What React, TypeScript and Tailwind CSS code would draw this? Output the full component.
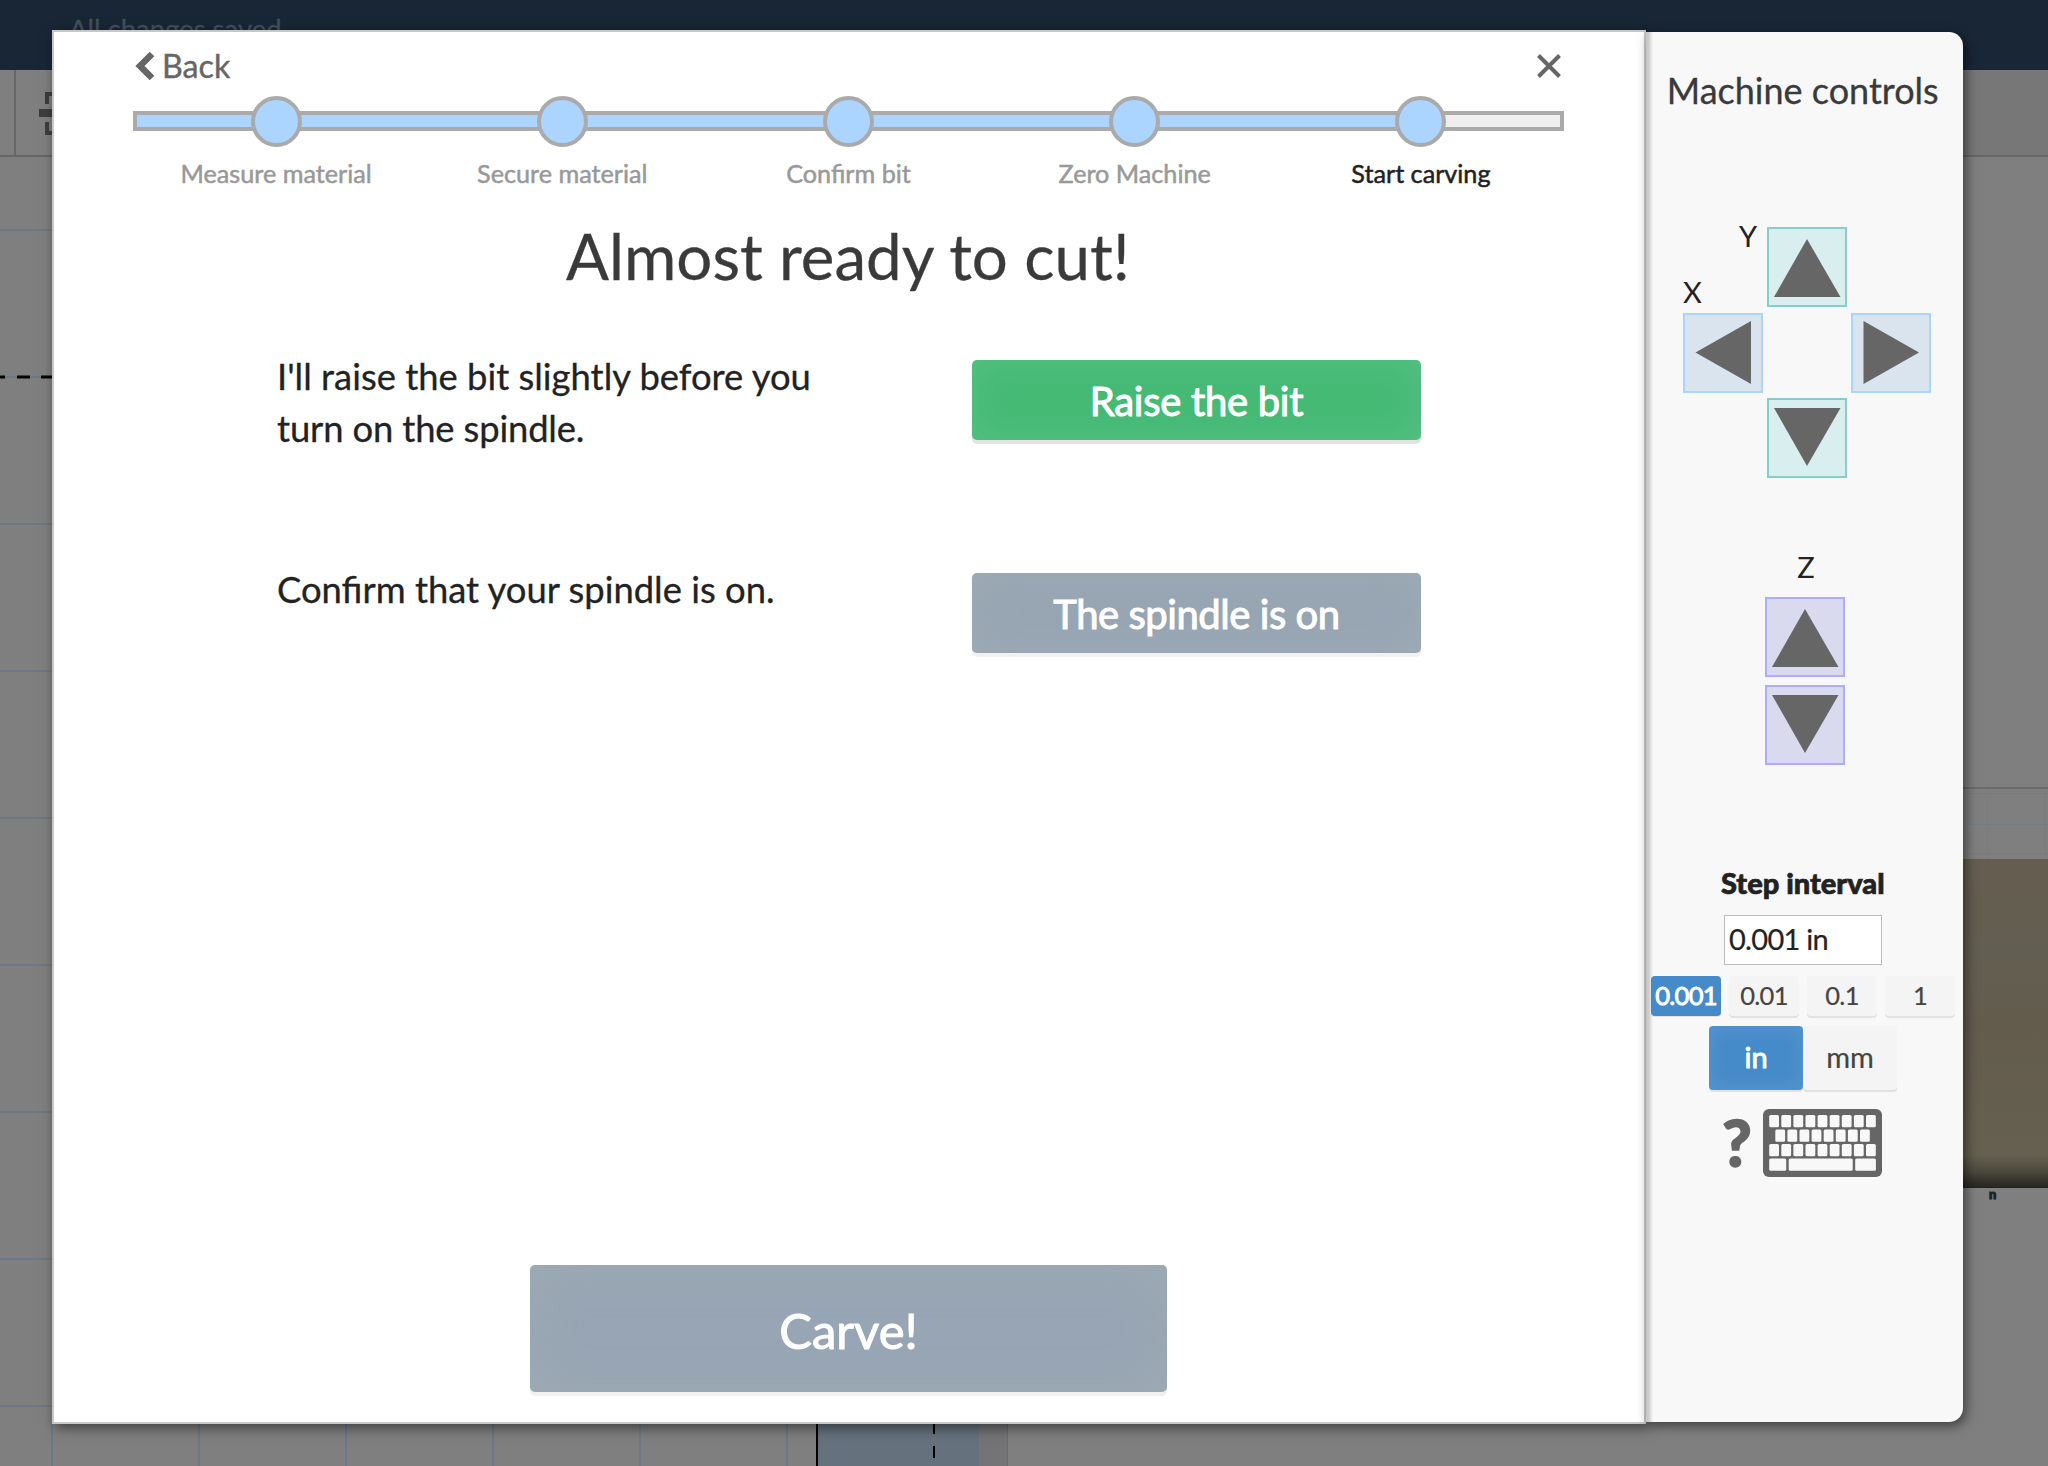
import React from "react";

const steps = ["Measure material", "Secure material", "Confirm bit", "Zero Machine", "Start carving"];
const rowLines = [229, 523, 670, 817, 964, 1111, 1258, 1405];
const colLines = [51, 198, 345, 492, 639, 786];

function Backdrop() {
  return (
    <svg className="absolute inset-0" width="2048" height="1466" shapeRendering="crispEdges">
      <defs>
        <linearGradient id="wood" x1="0" y1="0" x2="0" y2="1">
          <stop offset="0" stopColor="#655d50" />
          <stop offset="0.3" stopColor="#625e50" />
          <stop offset="0.5" stopColor="#635c4d" />
          <stop offset="0.9" stopColor="#65604f" />
          <stop offset="0.95" stopColor="#4c483c" />
          <stop offset="1" stopColor="#25231f" />
        </linearGradient>
      </defs>
      <rect width="2048" height="1466" fill="#7f7f7f" />
      <rect x="1900" y="70" width="148" height="85" fill="#777" />
      <rect width="2048" height="70" fill="#192635" />
      <rect x="0" y="155" width="2048" height="2" fill="#666" />
      <rect x="14" y="70" width="2" height="85" fill="#666" />
      <path d="M47 104V94H58M47 122V133H58" stroke="#3d3d3d" strokeWidth="4" fill="none" />
      <rect x="39" y="109" width="20" height="8" fill="#3d3d3d" />
      {rowLines.map((y) => (
        <rect key={y} x="0" y={y} width="52" height="2" fill="#6c7885" />
      ))}
      <rect x="0" y="376" width="52" height="2" fill="#6c7885" />
      <path d="M0 377h5M17 377h13M41 377h12" stroke="#000" strokeWidth="3" shapeRendering="auto" />
      {colLines.map((x) => (
        <rect key={x} x={x} y="1424" width="2" height="42" fill="#6c7885" />
      ))}
      <rect x="818" y="1420" width="161" height="46" fill="#65717d" />
      <rect x="816" y="1420" width="2" height="46" fill="#000" />
      <path d="M934 1424v10M934 1446v12" stroke="#000" strokeWidth="2" />
      <rect x="979" y="1420" width="28" height="46" fill="#747477" />
      <rect x="1007" y="1420" width="1" height="46" fill="#6c6c6c" />
      <rect x="1960" y="787" width="88" height="2" fill="#6b6b6b" />
      <path d="M1960 793.500h88M1960 824.500h88M1960 853.500h88M1987.500 789v70M2045.500 789v70" stroke="#757c87" strokeWidth="1" />
      <rect x="1955" y="859" width="93" height="329" fill="url(#wood)" />
      <text x="1989" y="1199" fontSize="13" fontWeight="900" fill="#222" stroke="#222" strokeWidth="1" fontFamily="Lato">
        n
      </text>
    </svg>
  );
}

function Arrow({ dir, tone }: { dir: "up" | "down" | "left" | "right"; tone: string }) {
  const points = {
    up: "39.500,11.500 73,69.500 6.500,69.500",
    down: "6.500,9.500 73,9.500 39.500,67.500",
    left: "12,39 67.500,7.500 67.500,70.500",
    right: "12,7.500 67.500,39 12,70.500",
  }[dir];
  return (
    <button className={`h-20 w-20 border-2 ${tone}`}>
      <svg viewBox="1.500 1.500 76 76" className="h-[76px] w-[76px]">
        <polygon points={points} fill="#666" />
      </svg>
    </button>
  );
}

const teal = "border-[#86cdcb] bg-[#d9eeee]";
const blue = "border-[#abd4ff] bg-[#dae4ef]";
const violet = "border-[#aeacfd] bg-[#dadaef]";

function Keyboard() {
  const row = (y: number, start: number, n: number) =>
    Array.from({ length: n }, (_, i) => <rect key={`${y}-${i}`} x={start + i * 12.1} y={y} width="9.800" height="12.300" rx="1.500" />);
  return (
    <svg width="119" height="68" viewBox="0 0 119 68">
      <rect width="119" height="68" rx="6" fill="#666" />
      <g fill="#f8f8f8">
        {row(6, 6.2, 9)}
        {row(20.5, 12.3, 8)}
        {row(35, 6.2, 9)}
        <rect x="6.200" y="49.500" width="17" height="12.300" rx="1.500" />
        <rect x="25.700" y="49.500" width="64" height="12.300" rx="1.500" />
        <rect x="92.200" y="49.500" width="20.700" height="12.300" rx="1.500" />
      </g>
    </svg>
  );
}

function MachineControls() {
  return (
    <aside className="relative mt-[2px] h-[1390px] w-[316.5px] shrink-0 rounded-r-[14px] bg-[#f8f8f8] shadow-[3px_4px_12px_rgba(0,0,0,0.5)]">
      <div className="absolute inset-y-0 left-0 w-[7px] bg-linear-to-r from-[#c8c8c8] from-30% to-[#f8f8f8]" />
      <h2 className="mr-[3px] pt-[34px] text-center text-[36px] leading-[48px] text-[#3a3a3a] [-webkit-text-stroke:0.3px]">Machine controls</h2>
      <div className="ml-[37px] mt-[113px] grid w-[248px] grid-cols-[84px_84px_80px] text-[29px] leading-9 text-[#222]">
        <div className="relative h-[86px]">
          <span className="absolute left-[56px] top-[-9px]">Y</span>
          <span className="absolute left-0 top-[47px]">X</span>
        </div>
        <Arrow dir="up" tone={teal} />
        <div />
        <Arrow dir="left" tone={blue} />
        <div className="h-[85px]" />
        <Arrow dir="right" tone={blue} />
        <div />
        <Arrow dir="down" tone={teal} />
      </div>
      <div className="ml-[119px] mt-[71px] flex w-20 flex-col items-center text-[29px] leading-9 text-[#222]">
        <span className="mb-[12px] pl-[2px]">Z</span>
        <Arrow dir="up" tone={violet} />
        <div className="h-2" />
        <Arrow dir="down" tone={violet} />
      </div>
      <div className="mr-[3px] mt-[100px] text-center text-[29px] font-black leading-9 text-[#222] [-webkit-text-stroke:0.7px]">Step interval</div>
      <div className="ml-[78px] mt-[14px] flex h-[50px] w-[158px] items-center border border-[#bbb] bg-white pb-[2px] pl-[4px] text-[29px] tracking-[-0.7px] text-[#222] [-webkit-text-stroke:0.2px]">
        0.001 in
      </div>
      <div className="relative ml-[5px] mt-[11px] flex gap-2 text-[25.5px] leading-9 tracking-[-0.7px] text-[#444]">
        {["0.001", "0.01", "0.1", "1"].map((v, i) => (
          <button
            key={v}
            className={
              i === 0
                ? "h-10 w-[70px] rounded-[4px] bg-[#468bc9] pb-[3px] text-white shadow-[0_1px_0_#e2e2e2] [-webkit-text-stroke:0.9px]"
                : "h-10 w-[70px] rounded-[4px] bg-[#f4f4f4] pb-[3px] shadow-[0_2px_0_#e2e2e2] [-webkit-text-stroke:0.2px]"
            }
          >
            {v}
          </button>
        ))}
      </div>
      <div className="ml-[63px] mt-[10px] flex text-[29px] text-[#444]">
        <button className="h-16 w-[94px] rounded-[4px] bg-[#468bc9] pb-[2px] text-white shadow-[0_2px_0_#e2e2e2,inset_0_0_20px_rgba(255,255,255,0.1)] [-webkit-text-stroke:0.9px]">
          in
        </button>
        <button className="h-16 w-[94px] rounded-[4px] bg-[#f4f4f4] pb-[2px] shadow-[0_2px_0_#e2e2e2] [-webkit-text-stroke:0.2px]">mm</button>
      </div>
      <div className="ml-[76px] mt-[19px] flex items-start text-[#666]">
        <span className="w-[41px] text-[64px] font-black leading-[67px] [-webkit-text-stroke:1.5px]">?</span>
        <Keyboard />
      </div>
    </aside>
  );
}

const action = "rounded-[5px] text-white [-webkit-text-stroke:1px]";
const copy = "-mt-[10px] w-[695px] text-[36.4px] leading-[52px] text-[#222] [-webkit-text-stroke:0.3px]";

export default function App() {
  return (
    <div className="relative h-[1466px] w-[2048px] overflow-hidden font-['Lato',sans-serif]">
      <Backdrop />
      <div className="absolute left-[69px] top-[13px] text-[27.5px] leading-[32px] text-[#43505d] [-webkit-text-stroke:0.3px]">All changes saved</div>
      <div className="absolute left-[52px] top-[30px] flex">
        <main className="h-[1394px] w-[1594px] border-2 border-[#c8c8c8] bg-white shadow-[3px_4px_12px_rgba(0,0,0,0.5)]">
          <div className="mx-20 flex h-[68px] items-center justify-between text-[#666]">
            <div className="flex items-center text-[32.2px] [-webkit-text-stroke:0.4px]">
              <svg width="22" height="30" viewBox="0 0 22 30" className="mr-[6px]">
                <path d="M18 3L6 15L18 27" fill="none" stroke="#666" strokeWidth="6.500" />
              </svg>
              Back
            </div>
            <svg width="28" height="28" viewBox="0 0 28 28" className="mr-[1px]">
              <path d="M3.500 3.500L24.500 24.500M24.500 3.500L3.500 24.500" stroke="#666" strokeWidth="4" />
            </svg>
          </div>
          <div className="relative mx-[79px] mt-[11px] flex h-5 w-[1431px] border-[4px] border-[#aaa] bg-[#eee]">
            <div className="h-3 w-[1283px] bg-[#abd4ff]" />
            <div className="absolute -left-[4px] -top-[19.5px] flex w-[1431px]">
              {steps.map((s) => (
                <div key={s} className="flex flex-1 justify-center">
                  <div className="h-[51px] w-[51px] rounded-full border-4 border-[#aaa] bg-[#abd4ff]" />
                </div>
              ))}
            </div>
          </div>
          <div className="mx-[79px] mt-[26px] flex w-[1431px] text-[25.2px] leading-[32px] text-[#999] [-webkit-text-stroke:0.5px]">
            {steps.map((s, i) => (
              <div key={s} className={i === 4 ? "flex-1 text-center text-[#222]" : "flex-1 text-center"}>
                {s}
              </div>
            ))}
          </div>
          <h1 className="mr-[2px] mt-[27px] text-center text-[63.6px] leading-[80px] text-[#3a3a3a] [-webkit-text-stroke:0.3px]">Almost ready to cut!</h1>
          <div className="ml-[223px] mt-[64px] flex h-[213px]">
            <p className={copy}>
              I'll raise the bit slightly before you
              <br />
              <span className="tracking-[-0.15px]">turn on the spindle.</span>
            </p>
            <button className={`${action} h-20 w-[449px] bg-[#44ba75] pt-[2px] text-[40px] tracking-[-0.3px] shadow-[0_4px_0_#e3e3e3,inset_0_0_40px_rgba(255,255,255,0.1)]`}>
              Raise the bit
            </button>
          </div>
          <div className="ml-[223px] flex h-20">
            <p className={copy}>Confirm that your spindle is on.</p>
            <button className={`${action} h-20 w-[449px] bg-[#98a5b4] pt-[2px] text-[40px] tracking-[-0.45px] shadow-[0_4px_0_#f1f1f1,inset_0_0_40px_rgba(170,190,180,0.3)]`}>
              The spindle is on
            </button>
          </div>
          <button className={`${action} ml-[476px] mt-[612px] block h-[127px] w-[637px] bg-[#98a5b4] pt-[4px] text-[49px] shadow-[0_4px_0_#f1f1f1,inset_0_0_50px_rgba(170,190,180,0.3)]`}>
            Carve!
          </button>
        </main>
        <MachineControls />
      </div>
    </div>
  );
}
